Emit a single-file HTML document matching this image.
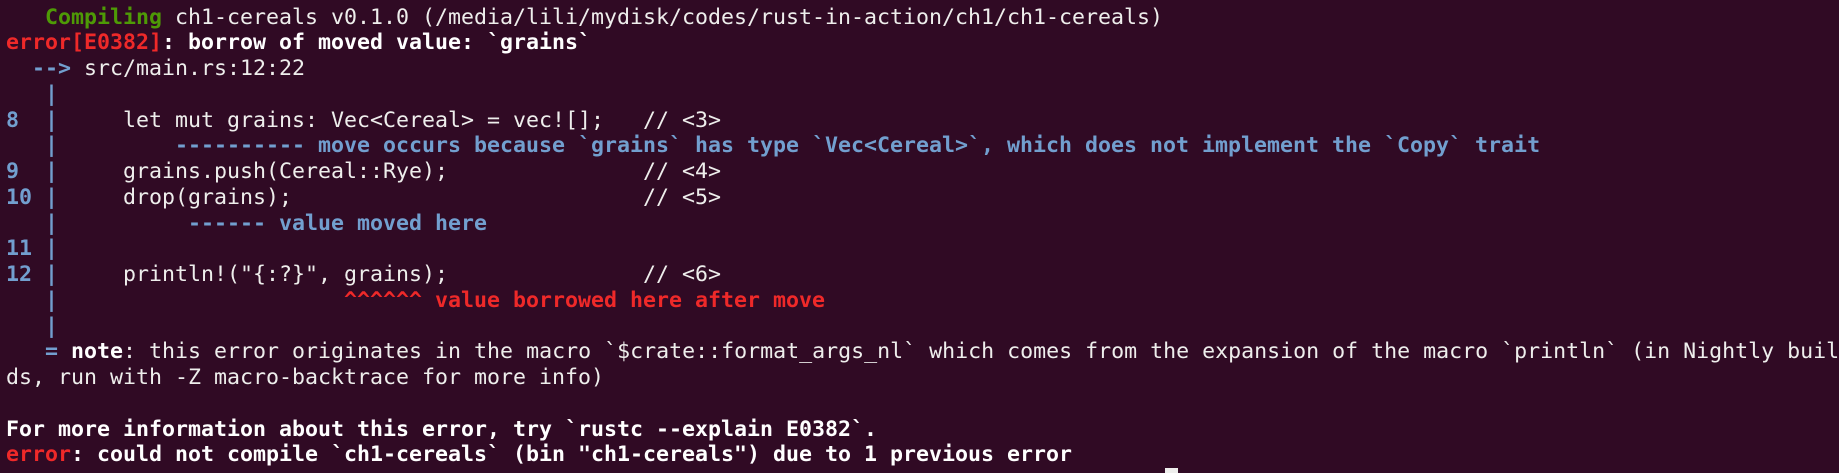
<!DOCTYPE html>
<html><head><meta charset="utf-8"><style>
html,body{margin:0;padding:0;background:#300a24;width:1839px;height:473px;overflow:hidden}
pre{margin:0;position:absolute;left:6px;top:4.5px;font-family:"DejaVu Sans Mono","Liberation Mono",monospace;font-size:21.6px;line-height:25.75px;color:#eeeeec;white-space:pre}
.g{color:#4e9a06;font-weight:bold}
.r{color:#ef2929;font-weight:bold}
.b{color:#729fcf;font-weight:bold}
.w{color:#ffffff;font-weight:bold}
.cur{position:absolute;left:1165px;top:468px;width:13px;height:5px;background:#eeeeec}
</style></head><body>
<pre><span class="g">   Compiling</span> ch1-cereals v0.1.0 (/media/lili/mydisk/codes/rust-in-action/ch1/ch1-cereals)
<span class="r">error[E0382]</span><span class="w">: borrow of moved value: `grains`</span>
<span class="b">  --&gt; </span>src/main.rs:12:22
<span class="b">   |</span>
<span class="b">8  |</span>     let mut grains: Vec&lt;Cereal&gt; = vec![];   // &lt;3&gt;
<span class="b">   |         ---------- move occurs because `grains` has type `Vec&lt;Cereal&gt;`, which does not implement the `Copy` trait</span>
<span class="b">9  |</span>     grains.push(Cereal::Rye);               // &lt;4&gt;
<span class="b">10 |</span>     drop(grains);                           // &lt;5&gt;
<span class="b">   |          ------ value moved here</span>
<span class="b">11 |</span>
<span class="b">12 |</span>     println!("{:?}", grains);               // &lt;6&gt;
<span class="b">   |</span>                      <span class="r">^^^^^^ value borrowed here after move</span>
<span class="b">   |</span>
<span class="b">   =</span> <span class="w">note</span>: this error originates in the macro `$crate::format_args_nl` which comes from the expansion of the macro `println` (in Nightly buil
ds, run with -Z macro-backtrace for more info)

<span class="w">For more information about this error, try `rustc --explain E0382`.</span>
<span class="r">error</span><span class="w">: could not compile `ch1-cereals` (bin "ch1-cereals") due to 1 previous error</span></pre>
<div class="cur"></div>
</body></html>
